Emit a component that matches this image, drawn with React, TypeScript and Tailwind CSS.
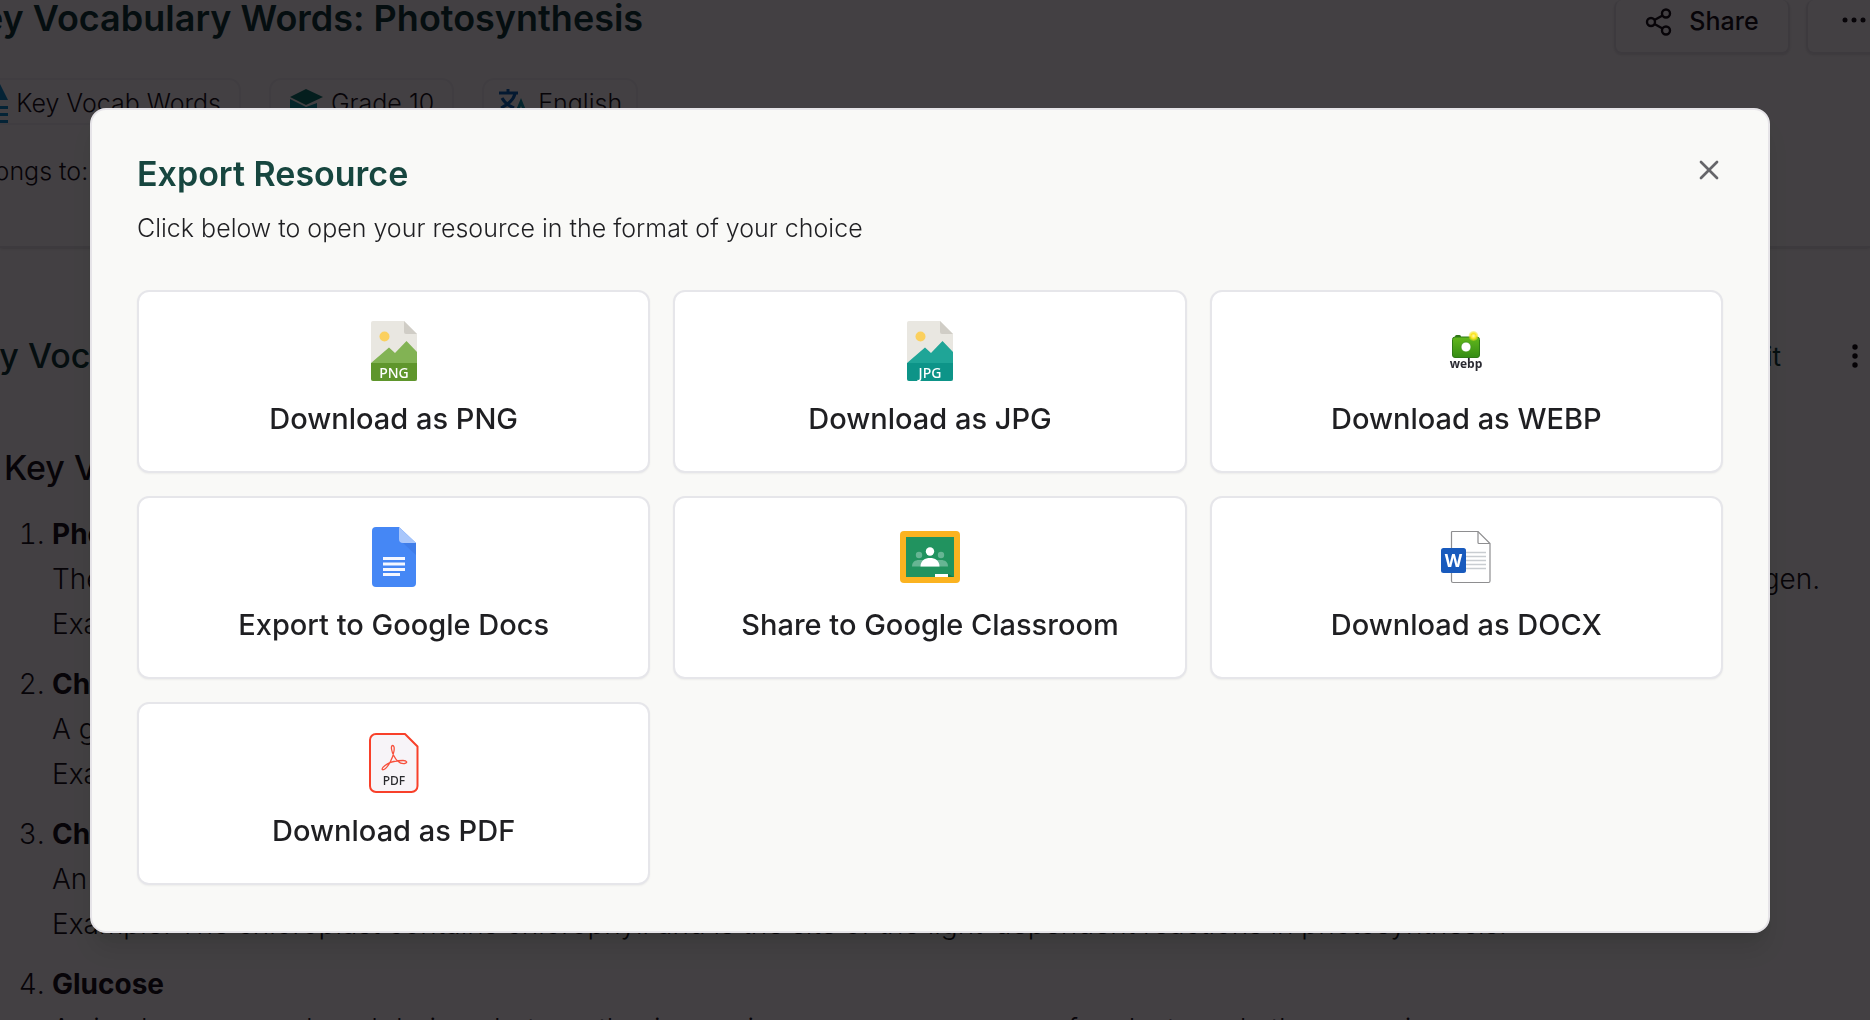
import React from "react";
import { X } from "lucide-react";

function ImageFileIcon({ label, light, dark }: { label: string; light: string; dark: string }) {
  return (
    <svg viewBox="0 0 60 60" className="size-[60px]" aria-hidden="true">
      <path d="M9 0H40L53 13V60H9A2 2 0 0 1 7 58V2A2 2 0 0 1 9 0Z" fill="#e9e7e1" />
      <path d="M40 0L53 13H42A2 2 0 0 1 40 11Z" fill="#d0cdc6" />
      <circle cx="20.500" cy="15.500" r="5" fill="#fbd05e" />
      <path d="M7 42L25 26.500L31 32L42.500 20L53 31V42Z" fill={light} />
      <path d="M7 42H53V58A2 2 0 0 1 51 60H9A2 2 0 0 1 7 58Z" fill={dark} />
      <text x="30" y="56.500" textAnchor="middle" fill="#fff" fontFamily="Noto Sans, sans-serif" fontWeight="500" fontSize="14">{label}</text>
    </svg>
  );
}

function WebpIcon() {
  return (
    <svg viewBox="0 0 60 60" className="size-[60px]" aria-hidden="true">
      <defs>
        <linearGradient id="camera" x1="0" y1="0" x2="0" y2="1">
          <stop offset="0" stopColor="#62b81c" />
          <stop offset="1" stopColor="#348c14" />
        </linearGradient>
        <radialGradient id="flash">
          <stop offset="0" stopColor="#fff9b0" />
          <stop offset=".5" stopColor="#fce51e" />
          <stop offset="1" stopColor="#f2e21a" stopOpacity=".3" />
        </radialGradient>
      </defs>
      <rect x="19" y="14" width="6" height="4" rx="1.500" fill="#2f7416" />
      <rect x="16.500" y="16" width="27" height="20.500" rx="2.500" fill="url(#camera)" stroke="#2f7a16" />
      <circle cx="30" cy="26" r="5" fill="#fff" stroke="#3e9416" strokeWidth=".8" />
      <circle cx="37.500" cy="15" r="5" fill="url(#flash)" />
      <text x="30" y="46.500" textAnchor="middle" fill="#2a2a32" fontFamily="Open Sans, sans-serif" fontWeight="700" fontSize="12">webp</text>
    </svg>
  );
}

function DocsIcon() {
  return (
    <svg viewBox="0 0 60 60" className="size-[60px]" aria-hidden="true">
      <path d="M12 0H35L52 16V56A4 4 0 0 1 48 60H12A4 4 0 0 1 8 56V4A4 4 0 0 1 12 0Z" fill="#4587f5" />
      <path d="M39 16H52V28Z" fill="#3a74dd" opacity=".5" />
      <path d="M35 0L52 16H39A4 4 0 0 1 35 12Z" fill="#a8c6fb" />
      <path d="M19 31.500H41M19 37H41M19 42.500H41M19 47.500H36" stroke="#f4f7ff" strokeWidth="2.800" />
    </svg>
  );
}

function ClassroomIcon() {
  return (
    <svg viewBox="0 0 60 60" className="size-[60px]" aria-hidden="true">
      <rect y="4" width="60" height="52" rx="4" fill="#fbb320" />
      <rect x="6" y="10" width="48" height="40" fill="#21935f" />
      <g fill="#66b593">
        <circle cx="19" cy="28" r="3.200" />
        <circle cx="41" cy="28" r="3.200" />
        <path d="M12 39.500C12 35 15 33 19 33H41C45 33 48 35 48 39.500Z" />
      </g>
      <circle cx="30" cy="24.500" r="4.200" fill="#fff" />
      <path d="M20.500 39.500C20.500 33.500 25 31 30 31S39.500 33.500 39.500 39.500Z" fill="#fff" />
      <rect x="35" y="47" width="13" height="3" fill="#fff" />
      <path d="M48 47L54 50H48Z" fill="#187548" />
    </svg>
  );
}

function WordIcon() {
  return (
    <svg viewBox="0 0 60 60" className="size-[60px]" aria-hidden="true">
      <path d="M16 4.500H42L54 16.500V54A1.500 1.500 0 0 1 52.500 55.500H17A1.500 1.500 0 0 1 15.500 54V5Z" fill="#fff" stroke="#8e8e90" strokeWidth="1.200" />
      <path d="M42 4.500V15.500A1 1 0 0 0 43 16.500H54" fill="none" stroke="#8e8e90" strokeWidth="1.200" />
      <path d="M30 25.500H50M30 29.500H50M30 33.500H50M30 37.500H50M30 41.500H50" stroke="#c9cdd1" strokeWidth="1.300" />
      <rect x="5" y="21" width="25" height="25" rx="2.500" fill="#185abd" />
      <text x="17.500" y="40" textAnchor="middle" fill="#fff" fontFamily="Open Sans, sans-serif" fontWeight="700" fontSize="18">W</text>
    </svg>
  );
}

function PdfIcon() {
  return (
    <svg viewBox="0 0 60 60" className="size-[60px]" aria-hidden="true">
      <path d="M12 1H41L53.500 13.500V53A6 6 0 0 1 47.500 59H12A6 6 0 0 1 6 53V7A6 6 0 0 1 12 1Z" fill="#f7f4f8" stroke="#f8402a" strokeWidth="2" strokeLinejoin="round" />
      <path d="M28.500 12.500C26.500 12.500 27.500 19 30 23C32 27 36 31 40.500 30.500C44 30 43 27.500 39 27.500C33 27.500 25 29.500 21 32.500C17 35.500 17.500 37.500 20 36.500C24 34.500 29 25.500 30 18C30.500 14.500 30 12.500 28.500 12.500Z" fill="none" stroke="#f8503c" strokeWidth="1.300" />
      <text x="30" y="51.500" textAnchor="middle" fill="#2a2a2e" fontFamily="Noto Sans, sans-serif" fontWeight="500" fontSize="12">PDF</text>
    </svg>
  );
}

const formats = [
  { label: "Download as PNG", icon: <ImageFileIcon label="PNG" light="#82b354" dark="#5f962c" /> },
  { label: "Download as JPG", icon: <ImageFileIcon label="JPG" light="#1fa597" dark="#0d9488" /> },
  { label: "Download as WEBP", icon: <WebpIcon /> },
  { label: "Export to Google Docs", icon: <DocsIcon /> },
  { label: "Share to Google Classroom", icon: <ClassroomIcon /> },
  { label: "Download as DOCX", icon: <WordIcon /> },
  { label: "Download as PDF", icon: <PdfIcon /> },
];

const words = [
  {
    term: "Photosynthesis",
    meaning: "The process by which green plants, algae and some bacteria use sunlight to convert carbon dioxide and water into glucose and oxygen.",
    example: "Example: Photosynthesis allows plants to make their own food.",
  },
  {
    term: "Chlorophyll",
    meaning: "A green pigment found in plants that absorbs light energy.",
    example: "Example: Chlorophyll gives leaves their green color.",
  },
  {
    term: "Chloroplast",
    meaning: "An organelle in plant cells where photosynthesis takes place.",
    example: "Example: The chloroplast contains chlorophyll and is the site of the light-dependent reactions in photosynthesis.",
  },
  {
    term: "Glucose",
    meaning: "A simple sugar produced during photosynthesis, serving as an energy source for plants and other organisms.",
    example: "Example: Glucose is used in cellular respiration.",
  },
];

function ResourcePage() {
  return (
    <div className="h-screen overflow-hidden bg-white text-[#111014]" aria-hidden="true">
      <header className="h-[248px] border-b-2 border-gray-200 shadow-sm">
        <div className="flex h-[54px] items-start justify-between">
          <h1 className="-ml-[42px] text-[36px] leading-9 font-semibold whitespace-nowrap text-[#0b3b37]">
            Key Vocabulary Words: Photosynthesis
          </h1>
          <div className="-mr-8 flex gap-4">
            <button className="flex h-[54px] w-[176px] items-center justify-center gap-4 rounded-lg border-2 border-t-0 border-gray-200 pb-2 text-[25px] font-medium shadow-sm">
              <svg viewBox="0 0 28 28" className="size-7" fill="none" stroke="currentColor" strokeWidth="2.400">
                <circle cx="6" cy="14" r="4" />
                <circle cx="21" cy="5.500" r="4" />
                <circle cx="21" cy="22.500" r="4" />
                <path d="M9.500 12L17.500 7.500M9.500 16L17.500 20.500" />
              </svg>
              Share
            </button>
            <button aria-label="More" className="flex h-[54px] w-[96px] items-center justify-center rounded-lg border-2 border-t-0 border-gray-200 pb-3 shadow-sm">
              <svg viewBox="0 0 24 6" className="h-1.5 w-6" fill="currentColor">
                <circle cx="3" cy="3" r="2.500" /><circle cx="12" cy="3" r="2.500" /><circle cx="21" cy="3" r="2.500" />
              </svg>
            </button>
          </div>
        </div>
        <div className="mt-6 flex gap-7 text-[25px] font-light whitespace-nowrap">
          <span className="-ml-6 flex h-[47px] w-[265px] items-center justify-end gap-2 rounded-xl border-2 border-gray-100 pt-1 pr-[18px]">
            <svg viewBox="0 0 24 40" className="h-10 w-6 shrink-0 fill-[#078ac9]">
              <path d="M16 0L24 16H8ZM4 22H24V25H4ZM4 29H24V32H4ZM4 36H24V39H4Z" />
            </svg>
            Key Vocab Words
          </span>
          <span className="flex h-[47px] items-center gap-2 rounded-xl border-2 border-gray-100 px-[18px] pt-1">
            <svg viewBox="0 0 34 34" className="size-[34px]">
              <path d="M17 2L34 10L17 18L1 10Z" fill="#07776c" />
              <path d="M1 12L17 20L28 16V28L17 33L1 25Z" fill="#0a93a0" />
            </svg>
            Grade 10
          </span>
          <span className="flex h-[47px] items-center gap-2 rounded-xl border-2 border-gray-100 px-[14px] pt-1">
            <svg viewBox="0 0 32 32" className="size-8" fill="none" strokeWidth="3">
              <path d="M1 5H20M10 1V5M4 10C7 16 12 18 16 20M17 6C15 13 9 17 3 20" stroke="#0666b8" />
              <path d="M16 31L23 14L30 31M19 25H27" stroke="#0694a6" />
            </svg>
            English
          </span>
        </div>
        <p className="-ml-[42px] mt-7 text-[25px] leading-9 font-light">Belongs to:</p>
      </header>

      <div className="mt-[84px] flex h-12 items-center justify-between text-[#0b3b37]">
        <h2 className="-ml-[42px] text-[34px] leading-12 font-medium">Key Vocabulary Words</h2>
        <div className="flex items-center gap-[71px] pr-3">
          <span className="text-[26px]">Edit</span>
          <svg viewBox="0 0 6 24" className="h-6 w-1.5" fill="#08080a">
            <circle cx="3" cy="3" r="2.700" /><circle cx="3" cy="12" r="2.700" /><circle cx="3" cy="21" r="2.700" />
          </svg>
        </div>
      </div>
      <h3 className="mt-16 pl-1 text-[34px] leading-12 font-medium">Key Vocabulary</h3>
      <ol className="mt-5 ml-[52px] list-decimal text-[28px] leading-[45px] font-light whitespace-nowrap">
        {words.map((word) => (
          <li key={word.term} className="mb-[15px]">
            <strong className="font-bold">{word.term}</strong>
            <p>{word.meaning}</p>
            <p>{word.example}</p>
          </li>
        ))}
      </ol>
    </div>
  );
}

export default function App() {
  return (
    <div className="font-['Inter',sans-serif]">
      <ResourcePage />
      <div className="fixed inset-0 flex items-start bg-[#040004]/75 pt-[108px] pr-[100px] pl-[90px]">
        <section role="dialog" aria-modal="true" aria-labelledby="export-title" className="flex-1 rounded-2xl border-2 border-[#e6e4e8] bg-[#f9f9f7] px-[45px] pt-10 pb-[46px] shadow-xl">
          <div className="flex items-start justify-between">
            <div>
              <h2 id="export-title" className="text-[34px] leading-12 font-semibold text-[#17463f]">Export Resource</h2>
              <p className="mt-3 text-[25px] leading-9 font-light text-[#1f1f22]">Click below to open your resource in the format of your choice</p>
            </div>
            <button aria-label="Close" className="mt-1 -mr-0.5 text-[#66666a]">
              <X className="size-8" strokeWidth={2} />
            </button>
          </div>
          <div className="mt-[44px] grid grid-cols-3 gap-[23px]">
            {formats.map((format) => (
              <button key={format.label} className="flex flex-col items-center gap-4 rounded-xl border-2 border-[#e6e6ea] bg-white pt-[29px] pb-[30px] text-[29px] leading-11 font-medium text-[#1f1f22] shadow-xs">
                {format.icon}
                {format.label}
              </button>
            ))}
          </div>
        </section>
      </div>
    </div>
  );
}
